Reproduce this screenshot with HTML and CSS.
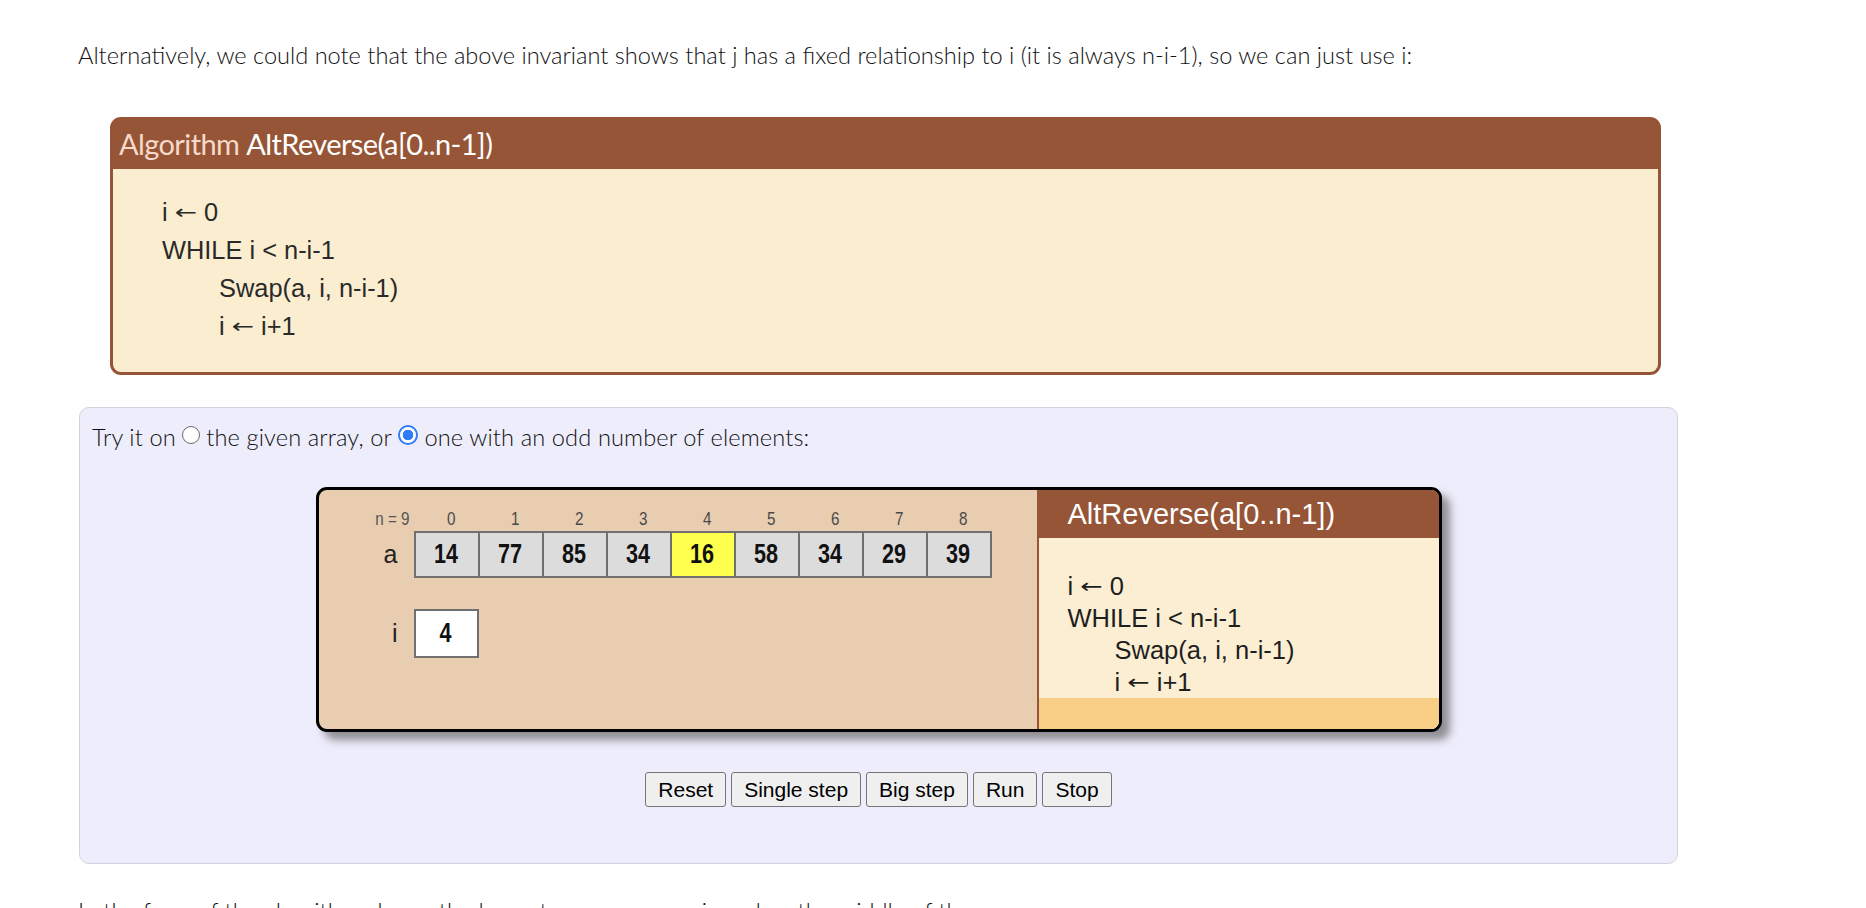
FILE: index.html
```html
<!DOCTYPE html>
<html>
<head>
<meta charset="utf-8">
<link rel="stylesheet" href="styles.css">
</head>
<body>
<main class="page">
  <p class="text">Alternatively, we could note that the above invariant shows that j has a fixed relationship to i (it is always n-i-1), so we can just use i:</p>

  <section class="algo">
    <div class="algo-head"><span class="algo-kw">Algorithm</span> AltReverse(a[0..n-1])</div>
    <div class="algo-body">
      <div class="code-line">i <span class="arrow">←</span> 0</div>
      <div class="code-line">WHILE i &lt; n-i-1</div>
      <div class="code-line indent">Swap(a, i, n-i-1)</div>
      <div class="code-line indent">i <span class="arrow">←</span> i+1</div>
    </div>
  </section>

  <section class="try">
    <div class="try-text">Try it on<input class="radio" type="radio" name="arr"> the given array, or<input class="radio" type="radio" name="arr" checked> one with an odd number of elements:</div>

    <div class="viz">
      <div class="viz-left">
        <div class="row index-row">
          <div class="label n-label"><span class="narrow">n = 9</span></div>
          <div class="indices">
            <span><i class="narrow">0</i></span><span><i class="narrow">1</i></span><span><i class="narrow">2</i></span><span><i class="narrow">3</i></span><span><i class="narrow">4</i></span><span><i class="narrow">5</i></span><span><i class="narrow">6</i></span><span><i class="narrow">7</i></span><span><i class="narrow">8</i></span>
          </div>
        </div>
        <div class="row">
          <div class="label var-label">a</div>
          <div class="cells">
            <div class="cell"><span class="narrow">14</span></div>
            <div class="cell"><span class="narrow">77</span></div>
            <div class="cell"><span class="narrow">85</span></div>
            <div class="cell"><span class="narrow">34</span></div>
            <div class="cell hl"><span class="narrow">16</span></div>
            <div class="cell"><span class="narrow">58</span></div>
            <div class="cell"><span class="narrow">34</span></div>
            <div class="cell"><span class="narrow">29</span></div>
            <div class="cell"><span class="narrow">39</span></div>
          </div>
        </div>
        <div class="row var-row">
          <div class="label var-label">i</div>
          <div class="var-box"><span class="narrow">4</span></div>
        </div>
      </div>
      <div class="viz-right">
        <div class="viz-head">AltReverse(a[0..n-1])</div>
        <div class="viz-body">
          <div class="vline"></div>
          <div class="vline">i <span class="arrow">←</span> 0</div>
          <div class="vline">WHILE i &lt; n-i-1</div>
          <div class="vline indent2">Swap(a, i, n-i-1)</div>
          <div class="vline indent2">i <span class="arrow">←</span> i+1</div>
          <div class="vline current"></div>
        </div>
      </div>
    </div>

    <div class="buttons">
      <button class="btn">Reset</button>
      <button class="btn">Single step</button>
      <button class="btn">Big step</button>
      <button class="btn">Run</button>
      <button class="btn">Stop</button>
    </div>
  </section>

  <p class="text next">In the form of the algorithm above, the loop stops as soon as i reaches the middle of the array.</p>
</main>
</body>
</html>
```

FILE: styles.css
```css
html, body {
  margin: 0;
  padding: 0;
  background: #ffffff;
}

body {
  font-family: "Lato", "Open Sans", sans-serif;
  color: #212529;
  overflow: hidden;
  height: 908px;
}

.page {
  width: 1600px;
  margin-left: 78px;
  padding-top: 39px;
}

.text {
  margin: 0;
  height: 33px;
  font-size: 23.6px;
  font-weight: 300;
  line-height: 33px;
  color: #111111;
  white-space: nowrap;
}

.text.next {
  margin-top: 31px;
}

/* Algorithm box */
.algo {
  margin: 45px 0 0 32px;
  width: 1551px;
  height: 258px;
  border-radius: 11px;
  background: #965536;
  padding: 0 3px 3px 3px;
  box-sizing: border-box;
  display: flex;
  flex-direction: column;
}

.algo-head {
  height: 52px;
  flex: none;
  display: flex;
  align-items: center;
  padding-left: 6px;
  font-size: 29px;
  font-weight: 400;
  color: #ffffff;
  letter-spacing: -0.6px;
}

.algo-kw {
  color: #f6d9c9;
  margin-right: 7px;
}

.algo-body {
  flex: 1;
  background: #fbeed0;
  border-radius: 0 0 8px 8px;
  padding: 24px 0 0 49px;
}

.code-line {
  font-family: "Liberation Sans", Arial, sans-serif;
  font-size: 25.4px;
  height: 38px;
  line-height: 38px;
  color: #2a2a2a;
}

.code-line.indent {
  padding-left: 57px;
}

.arrow {
  font-family: "DejaVu Sans", sans-serif;
  font-size: 1.05em;
  line-height: 1;
  display: inline-block;
  transform: scaleY(0.75);
}

/* Try it box */
.try {
  margin: 32px 0 0 1px;
  width: 1599px;
  box-sizing: border-box;
  background: #eeedfc;
  border: 1px solid #d3d2de;
  border-radius: 10px;
  padding: 13px 12px 56px 12px;
}

.try-text {
  height: 33px;
  font-size: 23.6px;
  font-weight: 300;
  line-height: 33px;
  color: #111111;
  display: flex;
  align-items: center;
  white-space: pre;
  letter-spacing: 0.12px;
}

.radio {
  appearance: none;
  -webkit-appearance: none;
  width: 18px;
  height: 18px;
  margin: 0 0 6px 6px;
  border-radius: 50%;
  border: 1.5px solid #6b6b6b;
  background: #ffffff;
  box-sizing: border-box;
}

.radio:checked {
  width: 20px;
  height: 20px;
  border: 2px solid #2f7cf6;
  background: radial-gradient(circle, #2f7cf6 0 5px, #ffffff 5.6px);
}

/* Visualisation */
.viz {
  width: 1126px;
  height: 245px;
  margin: 33px auto 0 auto;
  border: 3px solid #000000;
  border-radius: 11px;
  box-sizing: border-box;
  display: flex;
  overflow: hidden;
  box-shadow: 8px 8px 8px rgba(90, 90, 90, 0.65);
  background: #e8cdb0;
}

.viz-left {
  width: 718px;
  flex: none;
  padding-top: 17px;
  font-family: "Liberation Sans", Arial, sans-serif;
}

.narrow {
  display: inline-block;
  font-style: normal;
  transform: scaleX(0.8);
}

.row {
  display: flex;
  align-items: center;
}

.label {
  width: 95px;
  flex: none;
  text-align: right;
  box-sizing: border-box;
}

.n-label {
  font-size: 19px;
  color: #555555;
  padding-right: 0;
  margin-right: -4px;
}

.index-row {
  height: 24px;
}

.indices {
  display: flex;
}

.indices span {
  width: 64px;
  text-align: center;
  padding-left: 20px;
  box-sizing: border-box;
  font-size: 19px;
  color: #4a4a4a;
}

.var-label {
  font-size: 25px;
  color: #222222;
  padding-right: 16px;
}

.cells {
  display: flex;
  border: 2px solid #707070;
}

.cell {
  width: 62px;
  height: 43px;
  display: flex;
  align-items: center;
  justify-content: center;
  background: #dcdcdc;
  border-left: 2px solid #707070;
  font-weight: bold;
  font-size: 27px;
  color: #111111;
}

.cell:first-child {
  border-left: none;
}

.cell.hl {
  background: #ffff4d;
}

.var-row {
  margin-top: 31px;
}

.var-box {
  width: 61px;
  height: 45px;
  border: 2px solid #707070;
  background: #ffffff;
  display: flex;
  align-items: center;
  justify-content: center;
  font-weight: bold;
  font-size: 27px;
  color: #111111;
}

.viz-right {
  flex: 1;
  display: flex;
  flex-direction: column;
  font-family: "Liberation Sans", Arial, sans-serif;
}

.viz-head {
  height: 48px;
  flex: none;
  background: #965536;
  color: #ffffff;
  font-size: 29px;
  display: flex;
  align-items: center;
  padding-left: 31px;
}

.viz-body {
  flex: 1;
  background: #fbeed2;
  border-left: 2px solid #965536;
  display: flex;
  flex-direction: column;
}

.vline {
  height: 32px;
  flex: none;
  line-height: 32px;
  font-size: 25.5px;
  color: #1e1e1e;
  padding-left: 29px;
}

.vline.indent2 {
  padding-left: 76px;
}

.vline.current {
  flex: 1;
  background: #f8ce86;
}

/* Buttons */
.buttons {
  display: flex;
  justify-content: center;
  gap: 5px;
  margin-top: 40px;
}

.btn {
  font-family: "Liberation Sans", Arial, sans-serif;
  font-size: 21px;
  height: 35px;
  padding: 0 12px;
  background: #efefef;
  border: 1px solid #767676;
  border-radius: 3px;
  color: #000000;
}
```
